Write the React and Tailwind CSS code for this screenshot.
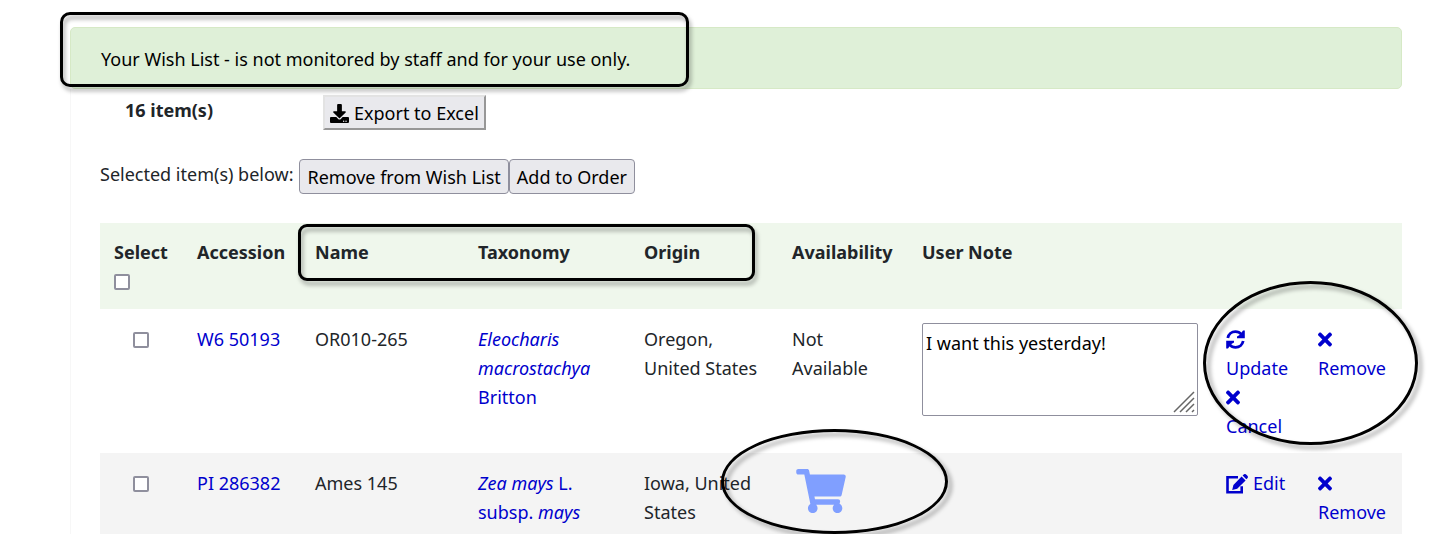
import { FaDownload, FaTimes, FaShoppingCart } from "react-icons/fa";

const accessions = [
  {
    id: "W6 50193",
    name: "OR010-265",
    taxonomy: (
      <>
        <i>Eleocharis macrostachya</i> Britton
      </>
    ),
    origin: "Oregon, United States",
    available: false,
    note: "I want this yesterday!",
    editing: true,
  },
  {
    id: "PI 286382",
    name: "Ames 145",
    taxonomy: (
      <>
        <i>Zea mays</i> L. subsp. <i>mays</i>
      </>
    ),
    origin: "Iowa, United States",
    available: true,
    note: "",
    editing: false,
  },
];

function Checkbox({ label }) {
  return (
    <input
      type="checkbox"
      aria-label={label}
      className="block size-4 appearance-none rounded-xs border-2 border-[#8f8f9d] bg-white checked:bg-[#0000cd]"
    />
  );
}

function RefreshIcon({ className }) {
  return (
    <svg viewBox="0 0 19 19" className={className} aria-hidden="true">
      <path
        d="M1.8 8C2.6 4.2 5.7 1.7 9.4 1.7c2.4 0 4.5 1 6 2.7M17.2 11c-.8 3.8-3.9 6.3-7.6 6.3-2.4 0-4.5-1-6-2.7"
        fill="none"
        stroke="currentColor"
        strokeWidth="2.8"
      />
      <path d="M18.8.4v7.8h-7.8V6.4l3-1.6L17 .4zM.2 18.6v-7.8H8v1.8l-3 1.6L2 18.6z" fill="currentColor" />
    </svg>
  );
}

function EditIcon({ className }) {
  return (
    <svg viewBox="0 0 22 20" className={className} aria-hidden="true">
      <path
        d="M12 3.2H1.5v15h14.2v-6"
        fill="none"
        stroke="currentColor"
        strokeWidth="2.6"
      />
      <path
        d="M15.6 2.4l4 4-8.4 8.4-5 1.2 1.2-5zM16.6 1.6l1.1-1.1c.7-.7 1.7-.7 2.4 0l1.3 1.3c.7.7.7 1.7 0 2.4l-1.1 1.1z"
        fill="currentColor"
      />
    </svg>
  );
}

function NoteBox({ id, note }) {
  return (
    <div className="relative">
      <textarea
        aria-label={`User note for ${id}`}
        defaultValue={note}
        className="block h-[93px] w-full resize-none rounded-xs border border-[#8f8f9d] bg-white px-[3px] py-[5px] text-black"
      />
      <svg
        viewBox="0 0 22 22"
        className="pointer-events-none absolute right-[3px] bottom-[3px] size-[22px]"
        fill="none"
        stroke="#666"
        strokeWidth="1.5"
        aria-hidden="true"
      >
        <path d="M1 21 21 1M7 21 21 7M13 21 21 13M19 21l2-2" />
      </svg>
    </div>
  );
}

function RowActions({ editing }) {
  if (!editing) {
    return (
      <a href="#edit" className="flex h-[29px] items-center gap-[5px] text-[#0000cd]">
        <EditIcon className="h-5 w-[22px]" />
        Edit
      </a>
    );
  }
  return (
    <>
      <a href="#update" className="block text-[#0000cd]">
        <RefreshIcon className="my-1 block h-[21px] w-[19px]" />
        Update
      </a>
      <a href="#cancel" className="block text-[#0000cd]">
        <FaTimes className="my-1 block h-[21px] w-[14px]" />
        Cancel
      </a>
    </>
  );
}

function AccessionRow({ item }) {
  return (
    <tr className="align-top even:bg-[#f4f4f4]">
      <td className="pt-[23px] pl-[33px]">
        <Checkbox label={`Select ${item.id}`} />
      </td>
      <td className="px-[14px] pt-4 pb-3">
        <a href="#accession" className="whitespace-nowrap text-[#0000cd]">
          {item.id}
        </a>
      </td>
      <td className="px-[14px] pt-4 pb-3">{item.name}</td>
      <td className="px-[14px] pt-4 pb-3">
        <a href="#taxonomy" className="text-[#0000cd]">
          {item.taxonomy}
        </a>
      </td>
      <td className="px-[14px] pt-4 pb-3">{item.origin}</td>
      <td className="px-[14px] pt-4 pb-3">
        {item.available ? (
          <button type="button" aria-label="Add to cart" className="block px-1 text-[#809fff]">
            <FaShoppingCart className="h-11 w-[50px]" />
          </button>
        ) : (
          "Not Available"
        )}
      </td>
      <td className="px-[14px] pt-[14px]">
        {item.editing && <NoteBox id={item.id} note={item.note} />}
      </td>
      <td className="px-[14px] pt-4 pb-3">
        <RowActions editing={item.editing} />
      </td>
      <td className="px-[14px] pt-4 pb-3">
        <a href="#remove" className="block text-[#0000cd]">
          <FaTimes className="my-1 block h-[21px] w-[14px]" />
          Remove
        </a>
      </td>
    </tr>
  );
}

export default function App() {
  return (
    <div className="relative h-screen overflow-hidden bg-white pt-[27px] pr-[51px] pl-[70px] font-['Noto_Sans',sans-serif] text-[18px] leading-[29px] text-[#212529]">
      <div className="rounded-[5px] border border-[#d6e9c6] bg-[#dff0d8] px-[30px] pt-[17px] pb-[14px] text-black">
        Your Wish List - is not monitored by staff and for your use only.
      </div>

      <main className="border-l border-[#f7f7f7] pl-[29px]">
        <div className="flex items-start pt-[6px] pl-[25px]">
          <h1 className="w-[198px] pt-px text-[18px] font-bold">16 item(s)</h1>
          <button
            type="button"
            className="flex h-[35px] items-center gap-[5px] border-2 border-t-[#e3e3e3] border-r-[#979797] border-b-[#979797] border-l-[#e3e3e3] bg-[#e9e9ed] px-[5px] pt-px text-black"
          >
            <FaDownload className="size-[19px]" />
            Export to Excel
          </button>
        </div>

        <div className="mt-[29px] flex items-start">
          <span className="mr-[6px] pt-px">Selected item(s) below:</span>
          <button
            type="button"
            className="h-[35px] rounded-[4px] border border-[#8f8f9d] bg-[#e9e9ed] px-[7px] pt-px text-black"
          >
            Remove from Wish List
          </button>
          <button
            type="button"
            className="h-[35px] rounded-[4px] border border-[#8f8f9d] bg-[#e9e9ed] px-[7px] pt-px text-black"
          >
            Add to Order
          </button>
        </div>

        <table className="mt-[29px] w-full table-fixed text-left">
          <colgroup>
            <col className="w-[83px]" />
            <col className="w-[118px]" />
            <col className="w-[163px]" />
            <col className="w-[166px]" />
            <col className="w-[148px]" />
            <col className="w-[130px]" />
            <col />
            <col className="w-[92px]" />
            <col className="w-[98px]" />
          </colgroup>
          <thead>
            <tr className="h-[86px] bg-[#eff7ec] align-top">
              <th className="pt-[15px] pl-[14px]">
                Select
                <span className="mt-[7px] block">
                  <Checkbox label="Select all" />
                </span>
              </th>
              <th className="pt-[15px] pl-[14px]">Accession</th>
              <th className="pt-[15px] pl-[14px]">Name</th>
              <th className="pt-[15px] pl-[14px]">Taxonomy</th>
              <th className="pt-[15px] pl-[14px]">Origin</th>
              <th className="pt-[15px] pl-[14px]">Availability</th>
              <th className="pt-[15px] pl-[14px]">User Note</th>
              <th />
              <th />
            </tr>
          </thead>
          <tbody>
            {accessions.map((item) => (
              <AccessionRow key={item.id} item={item} />
            ))}
          </tbody>
        </table>
      </main>

      {/* callouts drawn over the page */}
      <div className="pointer-events-none absolute top-3 left-[60px] h-[75px] w-[629px] rounded-[10px] border-3 border-black drop-shadow-[2px_4px_2px_rgba(0,0,0,0.35)]" />
      <div className="pointer-events-none absolute top-[224px] left-[298px] h-[57px] w-[457px] rounded-[9px] border-3 border-black drop-shadow-[2px_4px_2px_rgba(0,0,0,0.35)]" />
      <div className="pointer-events-none absolute top-[281px] left-[1203px] h-[164px] w-[215px] rounded-[50%] border-3 border-black drop-shadow-[4px_4px_2px_rgba(0,0,0,0.35)]" />
      <div className="pointer-events-none absolute top-[429px] left-[721px] h-[105px] w-[227px] rounded-[50%] border-3 border-black drop-shadow-[4px_4px_2px_rgba(0,0,0,0.35)]" />
    </div>
  );
}
